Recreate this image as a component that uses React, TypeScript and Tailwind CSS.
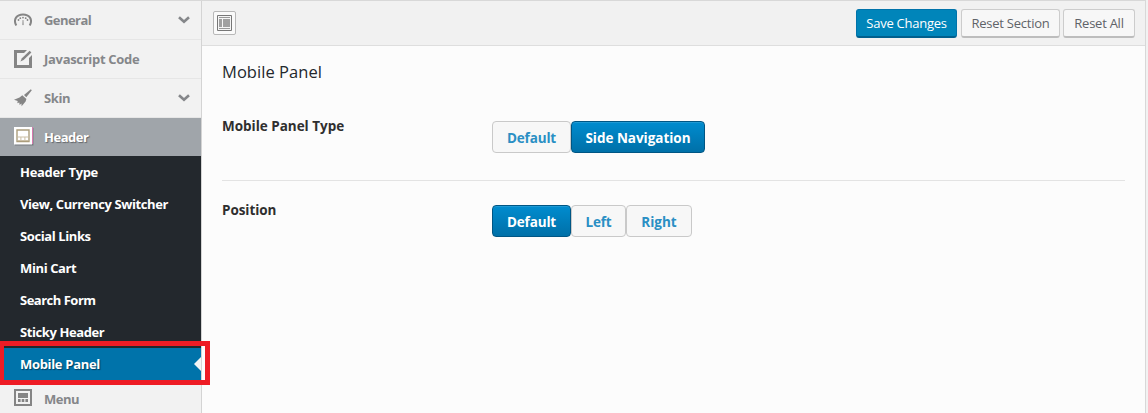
import type { ReactNode } from "react";

const submenu = [
  { label: "Header Type", track: "tracking-[-0.32px]" },
  { label: "View, Currency Switcher", track: "tracking-[-0.41px]" },
  { label: "Social Links", track: "tracking-[-0.4px]" },
  { label: "Mini Cart", track: "tracking-[-0.38px]" },
  { label: "Search Form", track: "tracking-[-0.5px]" },
  { label: "Sticky Header", track: "tracking-[-0.4px]" },
];

function Chevron() {
  return (
    <svg className="ml-auto mr-[11px]" width="12" height="8" viewBox="0 0 12 8" fill="none">
      <path d="M1 1.2 6 5.8 11 1.2" stroke="#85878a" strokeWidth="2.6" />
    </svg>
  );
}

function GaugeIcon() {
  return (
    <svg width="18" height="18" viewBox="0 0 18 18" fill="none">
      <path d="M2.300 14.500C-1.200 8.300 2.800 3.400 9 3.400s10.200 4.900 6.700 11.100" stroke="#858585" strokeWidth="2" />
      <path d="M8.500 9h1l.3 4.500a.8.8 0 0 1-1.600 0z" fill="#a0a0a0" />
      <g fill="#858585">
        <circle cx="4.500" cy="9" r="0.900" />
        <circle cx="6.300" cy="7.200" r="0.900" />
        <circle cx="9" cy="6.600" r="0.900" />
        <circle cx="11.700" cy="7.200" r="0.900" />
        <circle cx="13.500" cy="9" r="0.900" />
      </g>
    </svg>
  );
}

function EditIcon() {
  return (
    <svg width="18" height="18" viewBox="0 0 18 18">
      <path d="M0 0h13L10 3H3v12h12V8l3-3v13H0z" fill="#858585" />
      <path d="M15.700.8 17.400 2.500 9.600 10 6.400 11.500 7.900 8.300z" fill="#858585" />
    </svg>
  );
}

function BroomIcon() {
  return (
    <svg width="18" height="18" viewBox="0 0 18 18">
      <path d="M16.800.3 17.800 1.300 12.300 8.200 10 6z" fill="#858585" />
      <path d="M8.300 6.200 12.400 10.100 11.600 12.500 7.600 17.200 7.400 14.600 5.600 16 5.300 13.600 3.300 14.200 3.700 12 0 10.800 5.500 8.500z" fill="#858585" />
    </svg>
  );
}

function HeaderIcon() {
  return (
    <svg width="20" height="20" viewBox="0 0 20 20">
      <path d="M1 1h18.500v17.500H1z" fill="#777b80" />
      <path d="M0 0h18v17.500H0z" fill="#fff" />
      <path d="M18 0h1v17h-1z" fill="#d778ae" />
      <path d="M3 3h12v11.500H3z" fill="#fff" stroke="#ab9d7c" strokeWidth="1.400" />
      <path d="M4 9.500h10v1H4zM6.400 10h1v3.500h-1zM10.400 10h1v3.500h-1zM4 13h10v1H4z" fill="#cbbfa6" />
    </svg>
  );
}

function MenuIcon() {
  return (
    <svg className="relative -top-[2px]" width="18" height="17" viewBox="0 0 18 17">
      <path d="M1 1h16v15H1z" fill="none" stroke="#858585" strokeWidth="2" />
      <path d="M4 4h10v5H4zM4 10h2.600v3H4zM7.700 10h2.600v3H7.700zM11.400 10H14v3h-2.600z" fill="#858585" />
    </svg>
  );
}

function NavRow({ icon, chevron, children }: { icon: ReactNode; chevron?: boolean; children: ReactNode }) {
  return (
    <div className="flex h-[39px] items-center border-b border-[#e6e6e6] pl-[14px] text-[#85878a]">
      <span className="w-[30px]">{icon}</span>
      <span className="pt-0.5">{children}</span>
      {chevron && <Chevron />}
    </div>
  );
}

function Segment({ active, width, children }: { active?: boolean; width: string; children: ReactNode }) {
  const look = active
    ? "border-[#005684] bg-linear-to-b from-[#008ccf] to-[#0070a8] text-white"
    : "border-[#c9c9c9] bg-[#f7f7f7] text-[#2a8fc4]";
  return (
    <button className={`flex h-8 items-center justify-center rounded-[4px] border pt-[3px] font-bold text-[13.5px] whitespace-nowrap shadow-[inset_0_1px_0_rgba(255,255,255,0.12)] ${look} ${width}`}>
      {children}
    </button>
  );
}

function ToolButton({ primary, width, children }: { primary?: boolean; width: string; children: ReactNode }) {
  const look = primary
    ? "border-[#0073aa] border-b-[#005f8d] bg-[#0085ba] text-white"
    : "border-[#cccccc] border-b-[#bdbdbd] bg-[#f7f7f7] text-[#5f6368]";
  return (
    <button className={`flex h-[29px] items-center justify-center rounded-[3px] border border-b-2 pt-0.5 text-[13px] whitespace-nowrap ${look} ${width}`}>
      {children}
    </button>
  );
}

export default function App() {
  return (
    <div className="relative flex h-[413px] w-[1148px] overflow-hidden bg-[#f2f2f2] font-['Open_Sans','Noto_Sans',sans-serif]">
      <div className="flex w-[1146px] border-t border-r border-[#d8d8d8]">
        <aside className="w-[202px] shrink-0 border-r border-[#d4d4d4] bg-[#f2f2f2] text-[13px] font-bold">
          <NavRow icon={<GaugeIcon />} chevron>
            <span className="tracking-[-0.55px]">General</span>
          </NavRow>
          <NavRow icon={<EditIcon />}>
            <span className="tracking-[-0.3px]">Javascript Code</span>
          </NavRow>
          <NavRow icon={<BroomIcon />} chevron>
            <span className="tracking-[-0.4px]">Skin</span>
          </NavRow>
          <div className="flex h-[38px] items-center bg-[#a0a5aa] pl-[14px] text-white [text-shadow:1px_1px_1px_#62666a]">
            <span className="w-[30px]"><HeaderIcon /></span>
            <span className="pt-0.5 tracking-[-0.5px]">Header</span>
          </div>
          <ul className="bg-[#23282d] text-white">
            {submenu.map((item) => (
              <li key={item.label} className="flex h-8 items-center pt-0.5 pl-5 whitespace-nowrap">
                <span className={item.track}>{item.label}</span>
              </li>
            ))}
            <li className="flex h-8 items-center bg-[#0073aa] pl-5 [text-shadow:1px_1px_1px_#003f60]">
              <span className="pt-0.5 tracking-[-0.32px]">Mobile Panel</span>
              <svg className="ml-auto" width="7" height="14" viewBox="0 0 7 14">
                <path d="M7 0v14L0 7z" fill="#f4f4f4" />
              </svg>
            </li>
          </ul>
          <NavRow icon={<MenuIcon />}>
            <span className="tracking-[-0.5px]">Menu</span>
          </NavRow>
        </aside>
        <main className="min-w-0 flex-1 bg-[#fcfcfc]">
          <div className="flex h-[45px] items-center border-b border-[#dedede] bg-[#f1f1f1] pr-[10px] pl-[11px]">
            <button className="flex h-6 w-[23px] items-center justify-center rounded-[2px] border border-[#b8b8b8] bg-[#fafafa]">
              <svg width="15" height="16" viewBox="0 0 15 16">
                <path d="M.5.5h14v15H.5z" fill="#f5f5f5" stroke="#777" />
                <path d="M2 2.500h11M2 13.500h11" stroke="#999" />
                <path d="M2 4h3v8H2zM6 4h7v8H6z" fill="#a0a0a0" />
              </svg>
            </button>
            <div className="ml-auto flex">
              <ToolButton primary width="w-[101px]"><span className="tracking-[-0.25px]">Save Changes</span></ToolButton>
              <span className="w-1" />
              <ToolButton width="w-[99px]"><span className="tracking-[-0.25px]">Reset Section</span></ToolButton>
              <span className="w-[3px]" />
              <ToolButton width="w-[72px]"><span className="tracking-[-0.25px]">Reset All</span></ToolButton>
            </div>
          </div>
          <div className="px-5 pt-[14px] text-[13.5px] font-bold text-[#2f2f2f]">
            <h2 className="text-[16.5px] leading-6 font-normal text-[#23282d]"><span className="tracking-[0.05px]">Mobile Panel</span></h2>
            <section className="mt-[37px] flex h-[60px] border-b border-[#e3e3e3]">
              <div className="w-[270px] leading-[11px]"><span className="tracking-[-0.02px]">Mobile Panel Type</span></div>
              <div className="flex">
                <Segment width="w-[79px]"><span className="tracking-[-0.15px]">Default</span></Segment>
                <Segment active width="w-[134px]"><span className="tracking-[-0.03px]">Side Navigation</span></Segment>
              </div>
            </section>
            <section className="mt-6 flex">
              <div className="w-[270px] leading-[11px]"><span className="tracking-[-0.06px]">Position</span></div>
              <div className="flex">
                <Segment active width="w-[79px]"><span className="tracking-[-0.15px]">Default</span></Segment>
                <Segment width="w-[55px]"><span className="tracking-[-0.2px]">Left</span></Segment>
                <Segment width="w-[66px]"><span className="tracking-[0px]">Right</span></Segment>
              </div>
            </section>
          </div>
        </main>
      </div>
      <div className="absolute top-[341px] left-[-1px] h-11 w-[211px] border-[5px] border-[#ee1c25]" />
    </div>
  );
}
